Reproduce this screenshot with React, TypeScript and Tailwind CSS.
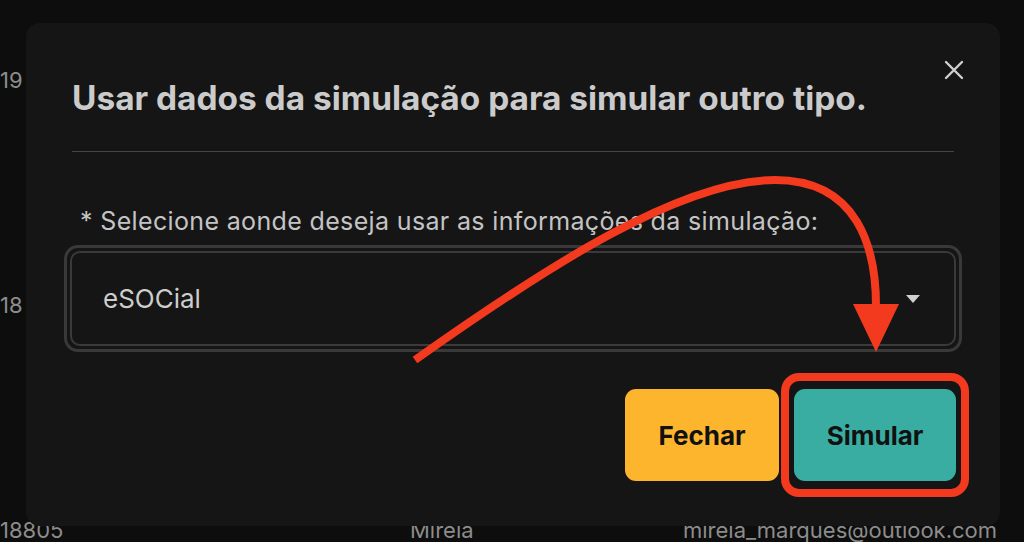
import React from "react";

export default function App() {
  return (
    <div
      className="relative w-[1024px] h-[542px] overflow-hidden bg-[#0d0d0d]"
      style={{ fontFamily: "Inter, 'Liberation Sans', sans-serif" }}
    >
      {/* background table fragments */}
      <div className="flex flex-col gap-[203px] pt-[69px] text-[22px] leading-[22px] text-[#8c8c8c]">
        <div className="h-[22px]">19</div>
        <div className="h-[22px]">18</div>
        <div className="grid h-[22px] grid-cols-[410px_273px_1fr] whitespace-nowrap">
          <span>18805</span>
          <span>Mirela</span>
          <span>mirela_marques@outlook.com</span>
        </div>
      </div>

      {/* modal */}
      <div className="absolute left-[26px] top-[23px] w-[974px] h-[503px] rounded-[14px] bg-[#151515] px-[46px]">
        <div className="relative flex h-[129px] items-end border-b border-[#454545] pb-[36px]">
          <h2 className="text-[33.4px] font-bold leading-none text-[#cbcbcb] whitespace-nowrap">
            Usar dados da simulação para simular outro tipo.
          </h2>
          <svg
            className="absolute right-[-10px] top-[37px]"
            width="20"
            height="20"
            viewBox="0 0 20 20"
          >
            <path d="M2 2 L18 18 M18 2 L2 18" stroke="#cfcfcf" strokeWidth="2.4" strokeLinecap="round" />
          </svg>
        </div>

        <div className="mt-[57px] pl-[8px] text-[25px] leading-none text-[#c4c4c4] tracking-[0.35px] whitespace-nowrap">
          * Selecione aonde deseja usar as informações da simulação:
        </div>

        <div className="mt-[11px] ml-[-8px] mr-[-8px] rounded-[14px] border-[3px] border-[#393939] p-[3px]">
          <div className="flex h-[95px] items-center justify-between rounded-[10px] border-2 border-[#3a3a3a] pl-[31px] pr-[34px]">
            <span className="text-[26px] text-[#cdcdcd]">eSOCial</span>
            <svg width="14" height="8" viewBox="0 0 14 8">
              <path d="M0 0 L14 0 L7 8 Z" fill="#d0d0d0" />
            </svg>
          </div>
        </div>

        <div className="mt-[21px] mr-[-15px] flex items-center justify-end gap-[2px]">
          <button className="h-[92px] w-[154px] rounded-[11px] bg-[#fdb52e] text-[26px] font-bold text-[#111]">
            Fechar
          </button>
          <div className="rounded-[18px] border-[8px] border-[#f33a1e] px-[5px] py-[8px]">
            <button className="h-[92px] w-[162px] rounded-[11px] bg-[#39ada1] text-[26px] font-bold text-[#111]">
              Simular
            </button>
          </div>
        </div>
      </div>

      {/* annotation arrow */}
      <svg className="absolute left-0 top-0 pointer-events-none" width="1024" height="542">
        <path
          d="M415 360 C545 268 680 180 775 180 C858 180 876 248 876 306"
          fill="none"
          stroke="#f33a1e"
          strokeWidth="8"
        />
        <path d="M853 304 L899 304 L876 352 Z" fill="#f33a1e" />
      </svg>
    </div>
  );
}
